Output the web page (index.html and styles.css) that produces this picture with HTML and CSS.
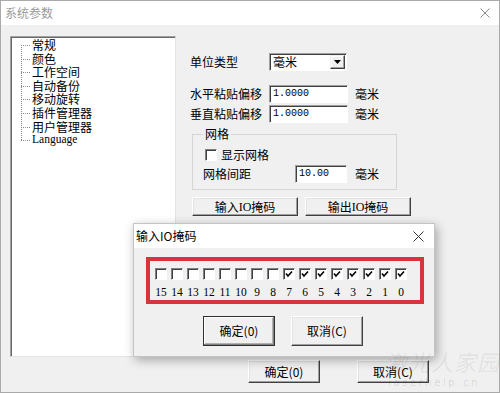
FILE: index.html
```html
<!DOCTYPE html>
<html lang="zh">
<head>
<meta charset="utf-8">
<title>系统参数</title>
<link rel="stylesheet" href="styles.css">
</head>
<body>
<div class="window">
  <div class="titlebar">
    <span class="title">系统参数</span>
    <svg class="close" viewBox="0 0 10 10"><path d="M0.5 0.5L9.5 9.5M9.5 0.5L0.5 9.5" stroke="#8a8a8a" stroke-width="1" fill="none"/></svg>
  </div>
  <div class="main">
    <div class="tree">
      <ul class="tree-list">
        <li>常规</li>
        <li>颜色</li>
        <li>工作空间</li>
        <li>自动备份</li>
        <li>移动旋转</li>
        <li>插件管理器</li>
        <li>用户管理器</li>
        <li class="latin">Language</li>
      </ul>
    </div>
    <div class="settings">
      <div class="row row-unit">
        <span class="lbl">单位类型</span>
        <div class="combo"><span class="combo-text">毫米</span><span class="drop"><svg viewBox="0 0 7 4" class="tri"><path d="M0 0H7L3.5 4Z" fill="#000"/></svg></span></div>
      </div>
      <div class="row row-h">
        <span class="lbl">水平粘贴偏移</span>
        <div class="field">1.0000</div>
        <span class="unit">毫米</span>
      </div>
      <div class="row row-v">
        <span class="lbl">垂直粘贴偏移</span>
        <div class="field">1.0000</div>
        <span class="unit">毫米</span>
      </div>
      <fieldset class="group">
        <legend>网格</legend>
        <div class="chk-row"><span class="box"></span><span>显示网格</span></div>
        <div class="row row-grid">
          <span class="lbl2">网格间距</span>
          <div class="field short">10.00</div>
          <span class="unit unit2">毫米</span>
        </div>
      </fieldset>
      <div class="io-btns">
        <div class="btn io">输入<span class="latin-s">IO</span>掩码</div>
        <div class="btn io">输出<span class="latin-s">IO</span>掩码</div>
      </div>
    </div>
  </div>
  <div class="footer">
    <div class="btn foot">确定(0)</div>
    <div class="btn foot">取消(C)</div>
  </div>

  <div class="dialog">
    <div class="dlg-title">
      <span>输入IO掩码</span>
      <svg class="dlg-close" viewBox="0 0 11 11"><path d="M0.5 0.5L10.5 10.5M10.5 0.5L0.5 10.5" stroke="#333" stroke-width="1" fill="none"/></svg>
    </div>
    <div class="dlg-body">
      <div class="mask">
        <div class="bits">
          <span class="cb"></span><span class="cb"></span><span class="cb"></span><span class="cb"></span>
          <span class="cb"></span><span class="cb"></span><span class="cb"></span><span class="cb"></span>
          <span class="cb on"><svg viewBox="0 0 8 8"><path d="M1 3.5L3 6L7 1.5" stroke="#000" stroke-width="1.6" fill="none"/></svg></span>
          <span class="cb on"><svg viewBox="0 0 8 8"><path d="M1 3.5L3 6L7 1.5" stroke="#000" stroke-width="1.6" fill="none"/></svg></span>
          <span class="cb on"><svg viewBox="0 0 8 8"><path d="M1 3.5L3 6L7 1.5" stroke="#000" stroke-width="1.6" fill="none"/></svg></span>
          <span class="cb on"><svg viewBox="0 0 8 8"><path d="M1 3.5L3 6L7 1.5" stroke="#000" stroke-width="1.6" fill="none"/></svg></span>
          <span class="cb on"><svg viewBox="0 0 8 8"><path d="M1 3.5L3 6L7 1.5" stroke="#000" stroke-width="1.6" fill="none"/></svg></span>
          <span class="cb on"><svg viewBox="0 0 8 8"><path d="M1 3.5L3 6L7 1.5" stroke="#000" stroke-width="1.6" fill="none"/></svg></span>
          <span class="cb on"><svg viewBox="0 0 8 8"><path d="M1 3.5L3 6L7 1.5" stroke="#000" stroke-width="1.6" fill="none"/></svg></span>
          <span class="cb on"><svg viewBox="0 0 8 8"><path d="M1 3.5L3 6L7 1.5" stroke="#000" stroke-width="1.6" fill="none"/></svg></span>
          <span class="num">15</span><span class="num">14</span><span class="num">13</span><span class="num">12</span>
          <span class="num">11</span><span class="num">10</span><span class="num">9</span><span class="num">8</span>
          <span class="num">7</span><span class="num">6</span><span class="num">5</span><span class="num">4</span>
          <span class="num">3</span><span class="num">2</span><span class="num">1</span><span class="num">0</span>
        </div>
      </div>
      <div class="dlg-btns">
        <div class="btn dlg default">确定(0)</div>
        <div class="btn dlg">取消(C)</div>
      </div>
    </div>
  </div>

  <div class="wm-cn">激光人家园</div>
  <div class="wm-en">laserhelp.cn</div>
</div>
</body>
</html>
```

FILE: styles.css
```css
* { box-sizing: border-box; margin: 0; padding: 0; }
html, body { width: 500px; height: 394px; overflow: hidden; background: #fff; }
body {
  font-family: "Noto Sans CJK SC", sans-serif;
  font-size: 12px;
  color: #000;
}

.window {
  position: relative;
  width: 500px;
  height: 393px;
  border: 1px solid #aaaaaa;
  background: #f0f0f0;
  display: flex;
  flex-direction: column;
}

.titlebar {
  flex: none;
  height: 24px;
  background: #fff;
  display: flex;
  align-items: center;
  justify-content: space-between;
  padding: 0 9px 0 4px;
}
.title { color: #9a9a9a; line-height: 14px; }
.close { width: 10px; height: 10px; }

.main {
  flex: none;
  display: flex;
  padding: 11px 0 0 9px;
}

.tree {
  flex: none;
  width: 166px;
  height: 321px;
  background: #fff;
  border-top: 1px solid #a0a0a0;
  border-left: 1px solid #a0a0a0;
  border-right: 1px solid #e3e3e3;
  border-bottom: 1px solid #e3e3e3;
  box-shadow: inset 1px 1px 0 #696969;
  padding: 1px 0 0 10px;
}
.tree-list {
  list-style: none;
  position: relative;
}
.tree-list::before {
  content: "";
  position: absolute;
  left: 0;
  top: 7px;
  bottom: 7px;
  border-left: 1px dotted #8a8a8a;
}
.tree-list li {
  position: relative;
  height: 13.6px;
  line-height: 13.6px;
  padding-left: 11px;
  white-space: nowrap;
}
.tree-list li::before {
  content: "";
  position: absolute;
  left: 0;
  top: 7px;
  width: 9px;
  border-top: 1px dotted #8a8a8a;
}
.tree-list li.latin {
  font-family: "Liberation Serif", serif;
  font-size: 11.5px;
}

.settings {
  flex: none;
  display: flex;
  flex-direction: column;
  margin-left: 14px;
  padding-top: 17px;
}
.row {
  display: flex;
  align-items: center;
  height: 18px;
}
.row-h { margin-top: 14px; }
.row-v { margin-top: 2px; }
.lbl { width: 79px; line-height: 14px; white-space: nowrap; }

.combo {
  width: 78px;
  height: 18px;
  background: #fff;
  border-top: 1px solid #a0a0a0;
  border-left: 1px solid #a0a0a0;
  border-right: 1px solid #fff;
  border-bottom: 1px solid #fff;
  box-shadow: inset 1px 1px 0 #404040, 0 0 0 0 transparent;
  display: flex;
  align-items: center;
  justify-content: space-between;
  padding: 0 1px 0 3px;
}
.combo-text { line-height: 14px; }
.drop {
  width: 15px;
  height: 14px;
  background: #f0f0f0;
  border-top: 1px solid #f0f0f0;
  border-left: 1px solid #f0f0f0;
  border-right: 1px solid #404040;
  border-bottom: 1px solid #404040;
  box-shadow: inset -1px -1px 0 #a0a0a0, inset 1px 1px 0 #fff;
  display: flex;
  align-items: center;
  justify-content: center;
}
.tri { width: 7px; height: 4px; }

.field {
  width: 79px;
  height: 18px;
  background: #fff;
  border-top: 1px solid #a0a0a0;
  border-left: 1px solid #a0a0a0;
  border-right: 1px solid #fff;
  border-bottom: 1px solid #fff;
  box-shadow: inset 1px 1px 0 #404040;
  font-family: "Liberation Mono", monospace;
  font-size: 10px;
  line-height: 16px;
  padding-left: 3px;
}
.field.short { width: 52px; }
.unit { margin-left: 7px; line-height: 14px; }
.unit2 { margin-left: 8px; }

.group {
  margin: 4px 0 0 2px;
  width: 205px;
  border: 1px solid #d5d5d5;
  padding: 0 10px 6px 10px;
}
.group legend {
  margin-left: 0;
  padding: 0 2px;
  line-height: 14px;
  height: 14px;
}
.chk-row {
  display: flex;
  align-items: center;
  height: 12px;
  margin-top: 8px;
  margin-left: 2px;
  line-height: 12px;
}
.box {
  width: 12px;
  height: 12px;
  background: #fff;
  border-top: 1px solid #808080;
  border-left: 1px solid #808080;
  border-right: 1px solid #fff;
  border-bottom: 1px solid #fff;
  box-shadow: inset 1px 1px 0 #404040;
  margin-right: 4px;
  flex: none;
}
.row-grid { margin-top: 4px; }
.lbl2 { width: 92px; line-height: 14px; }

.btn {
  display: flex;
  align-items: center;
  justify-content: center;
  background: #f0f0f0;
  border-top: 1px solid #fff;
  border-left: 1px solid #fff;
  border-right: 1px solid #404040;
  border-bottom: 1px solid #404040;
  box-shadow: inset -1px -1px 0 #a0a0a0, inset 1px 1px 0 #e3e3e3;
  line-height: 14px;
  white-space: nowrap;
}
.latin-s { font-family: "Liberation Serif", serif; font-size: 12px; }

.io-btns {
  display: flex;
  gap: 7px;
  margin: 7px 0 0 2px;
}
.btn.io { width: 106px; height: 19px; }

.footer {
  flex: none;
  display: flex;
  gap: 37px;
  margin-top: 3px;
  padding-left: 247px;
}
.btn.foot { width: 72px; height: 23px; }

.dialog {
  position: absolute;
  left: 132px;
  top: 222px;
  width: 302px;
  height: 134px;
  background: #f0f0f0;
  border: 1px solid #c4c4c4;
  box-shadow: 2px 3px 10px rgba(0, 0, 0, 0.32);
  display: flex;
  flex-direction: column;
}
.dlg-title {
  flex: none;
  height: 24px;
  background: #fff;
  display: flex;
  align-items: center;
  justify-content: space-between;
  padding: 0 10px 0 2px;
  line-height: 14px;
}
.dlg-close { width: 11px; height: 11px; }

.dlg-body {
  display: flex;
  flex-direction: column;
  padding: 9px 0 0 12px;
}
.mask {
  width: 278px;
  height: 47px;
  border: 4px solid #d8343b;
  padding: 7px 0 0 3px;
}
.bits {
  display: grid;
  grid-template-columns: repeat(16, 16px);
  grid-template-rows: 12px 12px;
  row-gap: 6px;
}
.cb {
  justify-self: center;
  width: 12px;
  height: 12px;
  background: #fff;
  border-top: 1px solid #808080;
  border-left: 1px solid #808080;
  border-right: 1px solid #fff;
  border-bottom: 1px solid #fff;
  box-shadow: inset 1px 1px 0 #404040;
  display: flex;
  align-items: center;
  justify-content: center;
}
.cb svg { width: 8px; height: 8px; }
.num {
  text-align: center;
  font-family: "Liberation Serif", serif;
  font-size: 11.5px;
  line-height: 12px;
}

.dlg-btns {
  display: flex;
  gap: 16px;
  margin: 12px 0 0 57px;
}
.btn.dlg { width: 72px; height: 30px; }
.btn.dlg.default {
  border: 1px solid #303030;
  box-shadow: inset -1px -1px 0 #808080, inset 1px 1px 0 #fff, inset -2px -2px 0 #b0b0b0;
}

.wm-cn {
  position: absolute;
  left: 384px;
  top: 346px;
  font-size: 22px;
  line-height: 28px;
  letter-spacing: 1px;
  color: rgba(0, 0, 0, 0.07);
  font-style: italic;
  white-space: nowrap;
}
.wm-en {
  position: absolute;
  left: 387px;
  top: 376px;
  font-family: "DejaVu Sans", sans-serif;
  font-size: 10px;
  line-height: 12px;
  letter-spacing: 2.6px;
  color: rgba(0, 0, 0, 0.12);
  white-space: nowrap;
}
```
